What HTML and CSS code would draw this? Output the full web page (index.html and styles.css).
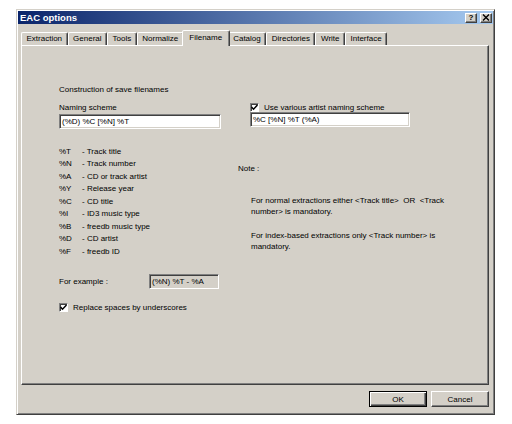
FILE: index.html
```html
<!DOCTYPE html>
<html>
<head>
<meta charset="utf-8">
<link rel="stylesheet" href="styles.css">
</head>
<body>
<div class="window">
  <div class="titlebar">
    <span class="title">EAC options</span>
    <span class="tbtns">
      <span class="tbtn help">?</span>
      <span class="tbtn close"><svg width="8" height="7" viewBox="0 0 8 7"><path d="M1 0.5 L7 6.5 M7 0.5 L1 6.5" stroke="#000" stroke-width="1.4"/></svg></span>
    </span>
  </div>
  <div class="main">
    <div class="tabs">
      <span class="tab">Extraction</span>
      <span class="tab">General</span>
      <span class="tab">Tools</span>
      <span class="tab">Normalize</span>
      <span class="tab active">Filename</span>
      <span class="tab">Catalog</span>
      <span class="tab">Directories</span>
      <span class="tab">Write</span>
      <span class="tab">Interface</span>
    </div>
    <div class="panel">
      <div class="heading">Construction of save filenames</div>
      <div class="fields">
        <div class="field left">
          <div class="label">Naming scheme</div>
          <div class="input w162">(%D) %C [%N] %T</div>
        </div>
        <div class="field right">
          <div class="check top"><span class="box"><svg width="7" height="7" viewBox="0 0 7 7"><path d="M0.5 3 L2.5 5.2 L6.5 1" fill="none" stroke="#000" stroke-width="1.5"/></svg></span><span>Use various artist naming scheme</span></div>
          <div class="input w160">%C [%N] %T (%A)</div>
        </div>
      </div>
      <div class="info">
        <div class="legend">
          <div class="row"><span class="code">%T</span><span>- Track title</span></div>
          <div class="row"><span class="code">%N</span><span>- Track number</span></div>
          <div class="row"><span class="code">%A</span><span>- CD or track artist</span></div>
          <div class="row"><span class="code">%Y</span><span>- Release year</span></div>
          <div class="row"><span class="code">%C</span><span>- CD title</span></div>
          <div class="row"><span class="code">%I</span><span>- ID3 music type</span></div>
          <div class="row"><span class="code">%B</span><span>- freedb music type</span></div>
          <div class="row"><span class="code">%D</span><span>- CD artist</span></div>
          <div class="row"><span class="code">%F</span><span>- freedb ID</span></div>
        </div>
        <div class="note">
          <div class="note-title">Note :</div>
          <p class="para first">For normal extractions either &lt;Track title&gt;&nbsp; OR &nbsp;&lt;Track number&gt; is mandatory.</p>
          <p class="para second">For index-based extractions only &lt;Track number&gt; is mandatory.</p>
        </div>
      </div>
      <div class="example">
        <span class="ex-label">For example :</span>
        <span class="input ex-box">(%N) %T - %A</span>
      </div>
      <div class="check bottom"><span class="box"><svg width="7" height="7" viewBox="0 0 7 7"><path d="M0.5 3 L2.5 5.2 L6.5 1" fill="none" stroke="#000" stroke-width="1.5"/></svg></span><span>Replace spaces by underscores</span></div>
    </div>
    <div class="buttons">
      <span class="btn default">OK</span>
      <span class="btn">Cancel</span>
    </div>
  </div>
</div>
</body>
</html>
```
FILE: styles.css
```css
body {
  margin: 0;
  background: #fff;
  font-family: "Liberation Sans", Arial, sans-serif;
  font-size: 8px;
  color: #000;
}

.window {
  margin: 9px 0 0 16px;
  width: 479px;
  height: 406px;
  box-sizing: border-box;
  background: #d4d0c8;
  border: 1px solid;
  border-color: #d4d0c8 #404040 #404040 #d4d0c8;
  box-shadow: inset 1px 1px #fff, inset -1px -1px #808080;
  padding: 1px;
  display: flex;
  flex-direction: column;
}

.titlebar {
  height: 13px;
  background: linear-gradient(to right, #0a246a, #a6caf0);
  display: flex;
  align-items: center;
  justify-content: space-between;
  padding: 0 1px 0 2px;
}

.title {
  color: #fff;
  font-weight: bold;
  font-size: 9.5px;
}

.tbtns {
  display: flex;
  gap: 3px;
}

.tbtn {
  width: 12px;
  height: 10px;
  box-sizing: border-box;
  background: #d4d0c8;
  border: 1px solid;
  border-color: #fff #404040 #404040 #fff;
  box-shadow: inset -1px -1px #808080;
  display: flex;
  align-items: center;
  justify-content: center;
  font-weight: bold;
  font-size: 8px;
  line-height: 8px;
}

.main {
  padding: 6px 0 0 3px;
  display: flex;
  flex-direction: column;
}

.tabs {
  display: flex;
  align-items: flex-end;
  height: 15px;
}

.tab {
  height: 13px;
  box-sizing: border-box;
  padding: 0 4.5px;
  line-height: 12px;
  border: 1px solid;
  border-bottom: none;
  border-color: #fff #404040 transparent #fff;
  box-shadow: inset -1px 0 #808080;
  border-radius: 2px 2px 0 0;
  white-space: nowrap;
}

.tab.active {
  height: 16px;
  margin: 0 -2px -1px;
  padding: 0 6.5px;
  line-height: 13px;
  position: relative;
  z-index: 1;
  background: #d4d0c8;
}

.panel {
  width: 468px;
  height: 340px;
  box-sizing: border-box;
  border: 1px solid;
  border-color: #fff #404040 #404040 #fff;
  box-shadow: inset -1px -1px #808080;
  padding: 38px 0 0 37px;
}

.heading {
  line-height: 12px;
}

.fields {
  display: flex;
  margin-top: 6px;
}

.field.left {
  width: 191px;
}

.label {
  line-height: 12px;
}

.input {
  display: block;
  height: 15px;
  box-sizing: border-box;
  background: #fff;
  border: 1px solid;
  border-color: #808080 #fff #fff #808080;
  box-shadow: inset 1px 1px #404040, inset -1px -1px #d4d0c8;
  padding: 0 2px;
  line-height: 13px;
  white-space: nowrap;
}

.w162 { width: 162px; }
.w160 { width: 160px; }

.check {
  display: flex;
  align-items: center;
  gap: 5px;
  height: 10px;
}

.box {
  width: 9px;
  height: 9px;
  box-sizing: border-box;
  background: #fff;
  border: 1px solid;
  border-color: #808080 #fff #fff #808080;
  box-shadow: inset 1px 1px #404040;
  display: flex;
  align-items: center;
  justify-content: center;
}

.box svg {
  display: block;
}

.info {
  display: flex;
  margin-top: 16.5px;
}

.legend {
  width: 179px;
}

.row {
  display: flex;
  line-height: 12.5px;
}

.code {
  width: 23px;
}

.note {
  width: 220px;
}

.note-title {
  padding-top: 17.5px;
  line-height: 12px;
}

.para {
  margin: 0;
  padding-left: 13px;
  width: 200px;
  line-height: 10.5px;
}

.para.first {
  margin-top: 21px;
}

.para.second {
  margin-top: 14px;
}

.example {
  display: flex;
  align-items: center;
  margin-top: 16px;
  height: 15px;
}

.ex-label {
  width: 90px;
}

.ex-box {
  width: 70px;
  background: #d4d0c8;
}

.check.bottom {
  margin-top: 13px;
}

.buttons {
  width: 468px;
  display: flex;
  justify-content: flex-end;
  gap: 4px;
  margin-top: 6px;
}

.btn {
  width: 58px;
  height: 16px;
  box-sizing: border-box;
  border: 1px solid;
  border-color: #fff #404040 #404040 #fff;
  box-shadow: inset -1px -1px #808080;
  display: flex;
  align-items: center;
  justify-content: center;
}

.btn.default {
  border-color: #000;
  box-shadow: inset 1px 1px #fff, inset -1px -1px #404040, inset -2px -2px #808080;
}
```
